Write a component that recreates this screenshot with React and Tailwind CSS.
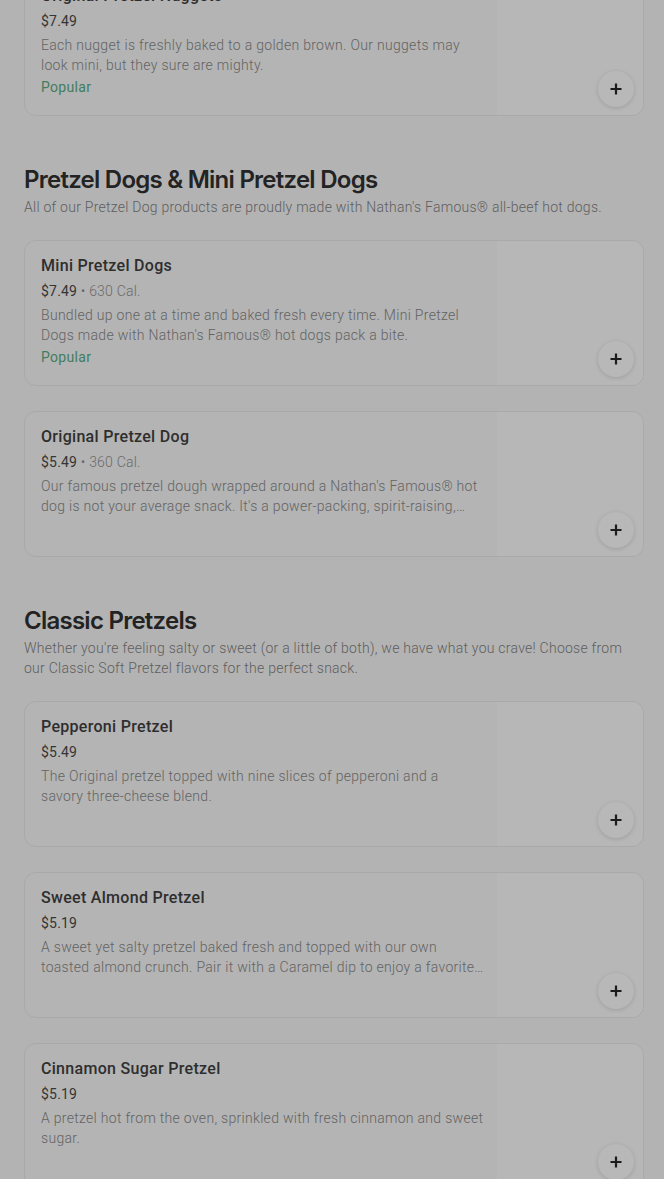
import React from "react";

const sections = [
  {
    items: [
      {
        name: "Original Pretzel Nuggets",
        price: "$7.49",
        desc: "Each nugget is freshly baked to a golden brown. Our nuggets may look mini, but they sure are mighty.",
        popular: true,
      },
    ],
  },
  {
    title: "Pretzel Dogs & Mini Pretzel Dogs",
    subtitle:
      "All of our Pretzel Dog products are proudly made with Nathan's Famous® all-beef hot dogs.",
    items: [
      {
        name: "Mini Pretzel Dogs",
        price: "$7.49",
        cal: "630 Cal.",
        desc: "Bundled up one at a time and baked fresh every time. Mini Pretzel Dogs made with Nathan's Famous® hot dogs pack a bite.",
        popular: true,
      },
      {
        name: "Original Pretzel Dog",
        price: "$5.49",
        cal: "360 Cal.",
        desc: "Our famous pretzel dough wrapped around a Nathan's Famous® hot dog is not your average snack. It's a power-packing, spirit-raising, crave-crushing treat.",
      },
    ],
  },
  {
    title: "Classic Pretzels",
    subtitle:
      "Whether you're feeling salty or sweet (or a little of both), we have what you crave! Choose from our Classic Soft Pretzel flavors for the perfect snack.",
    items: [
      {
        name: "Pepperoni Pretzel",
        price: "$5.49",
        desc: "The Original pretzel topped with nine slices of pepperoni and a savory three-cheese blend.",
      },
      {
        name: "Sweet Almond Pretzel",
        price: "$5.19",
        desc: "A sweet yet salty pretzel baked fresh and topped with our own toasted almond crunch. Pair it with a Caramel dip to enjoy a favorite combination.",
      },
      {
        name: "Cinnamon Sugar Pretzel",
        price: "$5.19",
        desc: "A pretzel hot from the oven, sprinkled with fresh cinnamon and sweet sugar.",
      },
    ],
  },
];

function Item({ item }) {
  return (
    <div className="flex h-[146px] rounded-[12px] border border-[#a9a9a9] bg-[#b4b4b4] overflow-hidden">
      <div className="flex-1 min-w-0 pl-4 pr-[13px] pt-[13px]">
        <div className="text-[16px] leading-6 font-medium tracking-[0.3px] text-[#2e2e2e]">{item.name}</div>
        <div className="mt-[3px] text-[14px] leading-5 tracking-[0.2px] text-[#353535]">
          {item.price}
          {item.cal && (
            <span className="text-[#6a6a6a] font-light"> • {item.cal}</span>
          )}
        </div>
        <div className="mt-[4px] text-[14px] leading-5 font-light tracking-[0.3px] text-[#636363] line-clamp-2">
          {item.desc}
        </div>
        {item.popular && (
          <div className="mt-[2px] text-[14px] leading-5 font-normal tracking-[0.3px] text-[#427d5e]">Popular</div>
        )}
      </div>
      <div className="relative w-[146px] shrink-0 bg-[#b7b7b7]">
        <button className="absolute right-[9px] bottom-[8px] w-9 h-9 rounded-full bg-[#b8b8b8] shadow-[0_1px_4px_rgba(0,0,0,0.14)] flex items-center justify-center">
          <svg width="14" height="14" viewBox="0 0 14 14">
            <path d="M7 1.5v11M1.5 7h11" stroke="#1c1c1c" strokeWidth="2.2" strokeLinecap="butt" />
          </svg>
        </button>
      </div>
    </div>
  );
}

export default function App() {
  return (
    <div
      className="min-h-[1179px] bg-[#b3b3b3] pl-6 pr-5 overflow-hidden"
      style={{ fontFamily: "Roboto, 'Liberation Sans', sans-serif" }}
    >
      <div className="-mt-[30px]">
        {sections.map((s, i) => (
          <div key={i} className={i > 0 ? "mt-12" : ""}>
            {s.title && (
              <div className="mb-[23px]">
                <h2
                  className="text-[24px] leading-8 font-semibold text-[#232323] tracking-[-0.75px]"
                  style={{ fontFamily: "Inter, 'Liberation Sans', sans-serif" }}
                >
                  {s.title}
                </h2>
                <p className="mt-[1px] text-[14px] leading-5 font-light tracking-[0.25px] text-[#5e5e5e]">{s.subtitle}</p>
              </div>
            )}
            <div className="flex flex-col gap-[25px]">
              {s.items.map((it, j) => (
                <Item key={j} item={it} />
              ))}
            </div>
          </div>
        ))}
      </div>
    </div>
  );
}
